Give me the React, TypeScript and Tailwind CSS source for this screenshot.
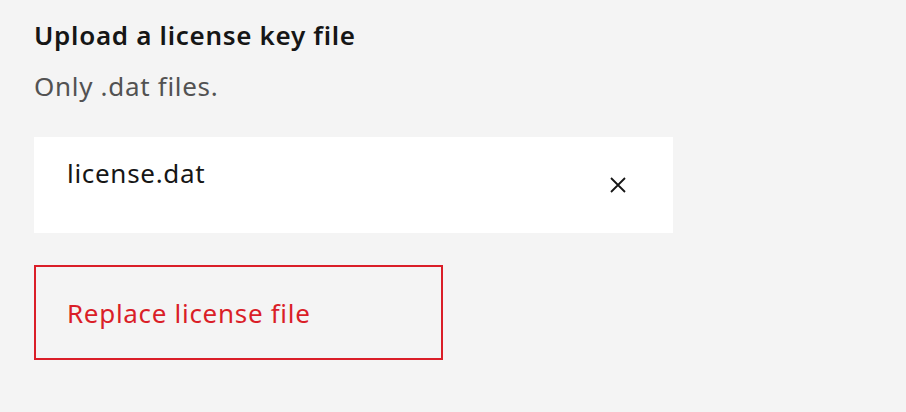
import React from 'react';

const font = { fontFamily: '"Noto Sans", "Open Sans", Arial, sans-serif' };

function CloseIcon() {
  return (
    <svg width="16" height="16" viewBox="0 0 16 16" fill="none" aria-hidden="true">
      <path d="M1 1L15 15M15 1L1 15" stroke="#161616" strokeWidth="1.8" />
    </svg>
  );
}

export default function App() {
  return (
    <div className="min-h-screen w-full bg-[#f4f4f4] pl-[34px] pt-[19px] tracking-[0.7px]" style={font}>
      <h2 className="text-[26px] leading-[32px] font-semibold text-[#161616]">
        Upload a license key file
      </h2>
      <p className="mt-[19px] text-[26px] leading-[32px] text-[#525252]">Only .dat files.</p>

      <div className="mt-[35px] flex h-[96px] w-[639px] items-start justify-between bg-white pl-[33px] pt-[20px]">
        <span className="text-[26px] leading-[32px] text-[#161616]">license.dat</span>
        <button className="mr-[47px] mt-[20px] flex h-[16px] w-[16px] items-center justify-center">
          <CloseIcon />
        </button>
      </div>

      <button className="mt-[32px] flex h-[95px] w-[409px] items-start border-2 border-[#da1e28] pl-[31px] pt-[30px] text-left">
        <span className="text-[26px] leading-[32px] text-[#da1e28]">Replace license file</span>
      </button>
    </div>
  );
}
